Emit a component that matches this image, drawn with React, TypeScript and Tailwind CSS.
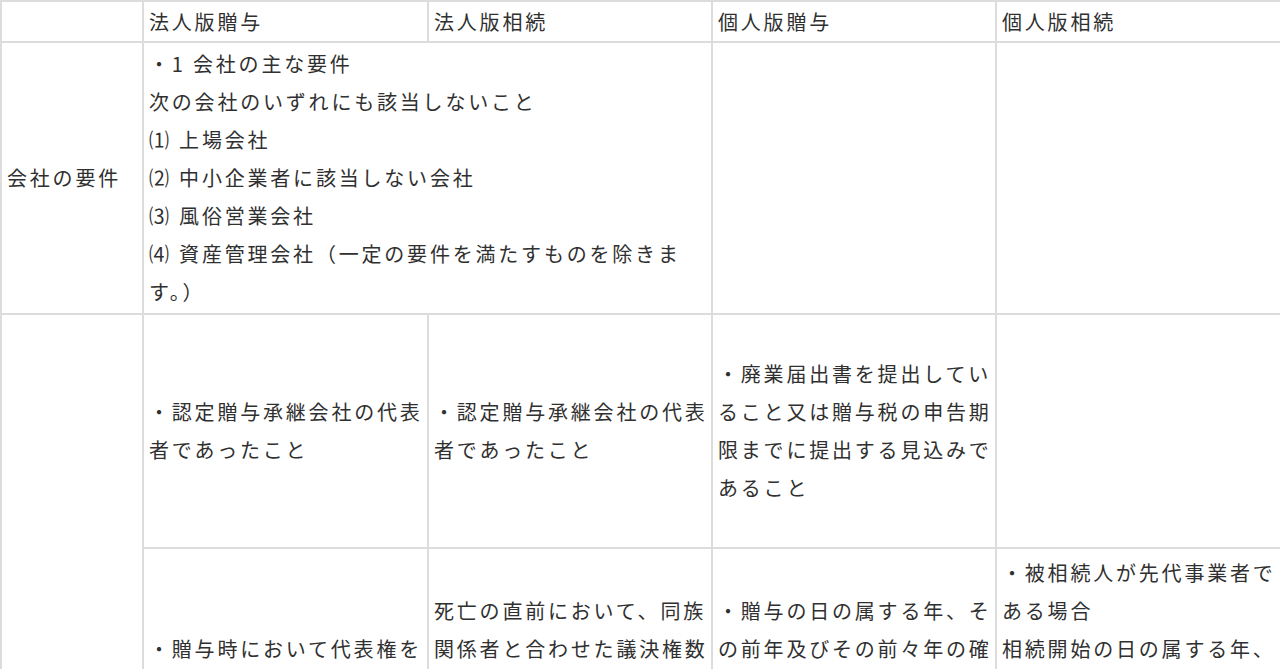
const cell =
  'border-2 border-[#dcdcdc] pl-[5px] pr-[3px] py-[2px] align-middle text-left font-normal'

const headCell =
  'border-2 border-[#dcdcdc] pl-[5px] pr-[3px] py-0 align-middle text-left font-normal'

const lowCell =
  'border-2 border-[#dcdcdc] pl-[5px] pr-[3px] py-[5px] align-middle text-left font-normal'

const headers = ['', '法人版贈与', '法人版相続', '個人版贈与', '個人版相続']

const companyLines = [
  '・1 会社の主な要件',
  '次の会社のいずれにも該当しないこと',
  '⑴ 上場会社',
  '⑵ 中小企業者に該当しない会社',
  '⑶ 風俗営業会社',
  '⑷ 資産管理会社（一定の要件を満たすものを除きます。）',
]

export default function App() {
  return (
    <div className="h-[669px] w-[1280px] overflow-hidden bg-white">
      <table className="w-[1280px] table-fixed border-collapse font-['Noto_Sans_CJK_JP',sans-serif] text-[20px] leading-[38px] tracking-[2.8px] text-[#303030]">
        <colgroup>
          <col className="w-[142px]" />
          <col className="w-[285px]" />
          <col className="w-[284px]" />
          <col className="w-[284px]" />
          <col className="w-[285px]" />
        </colgroup>
        <thead>
          <tr className="h-[41px]">
            {headers.map((h, i) => (
              <th key={i} className={headCell}>
                {h}
              </th>
            ))}
          </tr>
        </thead>
        <tbody>
          <tr>
            <td className={cell}>会社の要件</td>
            <td className={cell} colSpan={2}>
              {companyLines.map((line) => (
                <div key={line}>{line}</div>
              ))}
            </td>
            <td className={cell}></td>
            <td className={cell}></td>
          </tr>
          <tr className="h-[234px]">
            <td className={cell} rowSpan={2}></td>
            <td className={cell}>・認定贈与承継会社の代表者であったこと</td>
            <td className={cell}>・認定贈与承継会社の代表者であったこと</td>
            <td className={cell}>
              ・廃業届出書を提出していること又は贈与税の申告期限までに提出する見込みであること
            </td>
            <td className={cell}></td>
          </tr>
          <tr>
            <td className={lowCell}>・贈与時において代表権を有していないこと</td>
            <td className={lowCell}>
              死亡の直前において、同族関係者と合わせた議決権数の合計が総議決権数の過半数であったこと
            </td>
            <td className={lowCell}>
              ・贈与の日の属する年、その前年及びその前々年の確定申告書を青色申告により提出していること
            </td>
            <td className={lowCell}>
              <div>・被相続人が先代事業者である場合</div>
              <div>
                相続開始の日の属する年、その前年及びその前々年の確定申告書を青色申告により提出していること
              </div>
            </td>
          </tr>
        </tbody>
      </table>
    </div>
  )
}
